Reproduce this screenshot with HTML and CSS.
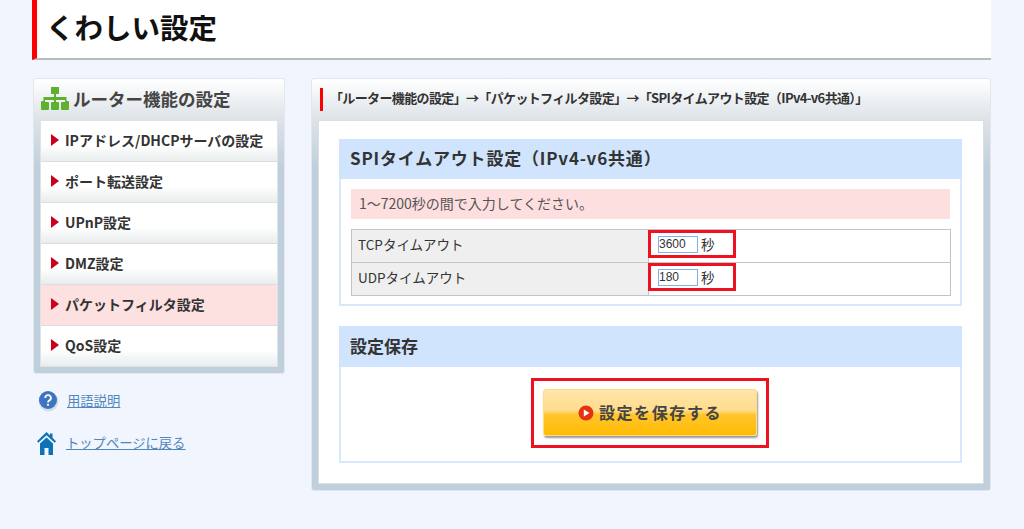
FILE: index.html
```html
<!DOCTYPE html>
<html lang="ja">
<head>
<meta charset="utf-8">
<title>くわしい設定</title>
<link rel="stylesheet" href="styles.css">
</head>
<body>
<div class="page">
  <header class="page-head"><h1>くわしい設定</h1></header>
  <div class="columns">
    <aside class="side">
      <nav class="side-box">
        <h2 class="side-title">
          <svg class="tree" width="30" height="23" viewBox="0 0 30 23"><path fill="#5fb02c" d="M11 0h8v7h-3v3h10.500v4H28a1 1 0 0 1 1 1v7a1 1 0 0 1-1 1h-6a1 1 0 0 1-1-1v-6a1 1 0 0 1 1-1h3v-2H16v2h2a1 1 0 0 1 1 1v6a1 1 0 0 1-1 1h-6a1 1 0 0 1-1-1v-6a1 1 0 0 1 1-1h2v-2H5v2h3a1 1 0 0 1 1 1v6a1 1 0 0 1-1 1H2a1 1 0 0 1-1-1v-7a1 1 0 0 1 1-1h1.500v-4H14V7h-3z"/></svg>
          ルーター機能の設定
        </h2>
        <ul class="menu">
          <li class="menu-item">IPアドレス/DHCPサーバの設定</li>
          <li class="menu-item">ポート転送設定</li>
          <li class="menu-item">UPnP設定</li>
          <li class="menu-item">DMZ設定</li>
          <li class="menu-item current">パケットフィルタ設定</li>
          <li class="menu-item">QoS設定</li>
        </ul>
      </nav>
      <a class="side-link help" href="#">
        <svg width="21" height="22" viewBox="0 0 21 22"><circle cx="10.500" cy="11.500" r="10" fill="#d5dde6"/><circle cx="10" cy="10" r="9" fill="#3f74c0"/><path d="M7.300 8a2.800 2.800 0 1 1 4.200 2.400c-1 .6-1.500 1-1.500 2" fill="none" stroke="#fff" stroke-width="1.800"/><circle cx="10" cy="14.800" r="1.100" fill="#fff"/></svg>
        <span>用語説明</span>
      </a>
      <a class="side-link home" href="#">
        <svg width="19" height="23" viewBox="0 0 19 23"><path fill="#0f72b8" d="M9.500 0 13 3.400V1.500h2.500v4.300L19 9.300l-1.300 1.500-8.200-7.600-8.200 7.600L0 9.300zM3 11.500l6.500-6 6.500 6V23h-4.500v-7h-4v7H3z"/></svg>
        <span>トップページに戻る</span>
      </a>
    </aside>
    <main class="main">
      <div class="crumb"><span class="crumb-text"><span class="crumb-label">「ルーター機能の設定」→「パケットフィルタ設定」→「SPIタイムアウト設定（IPv4-v6共通）」</span></span></div>
      <div class="panel">
        <section class="sec">
          <h3 class="sec-title wide">SPIタイムアウト設定（IPv4-v6共通）</h3>
          <div class="sec-body">
            <p class="notice">1～7200秒の間で入力してください。</p>
            <table class="form">
              <tr>
                <th>TCPタイムアウト</th>
                <td><span class="mark"><input class="num" value="3600"> 秒</span></td>
              </tr>
              <tr>
                <th>UDPタイムアウト</th>
                <td><span class="mark"><input class="num" value="180"> 秒</span></td>
              </tr>
            </table>
          </div>
        </section>
        <section class="sec save">
          <h3 class="sec-title tall">設定保存</h3>
          <div class="save-body">
            <div class="save-mark">
              <button class="save-btn" type="button">
                <svg width="16" height="16" viewBox="0 0 16 16"><circle cx="8" cy="8" r="7.500" fill="#e5330f"/><path d="M5.800 4.500 11.500 8l-5.700 3.500z" fill="#fff"/></svg>
                <span class="btn-label">設定を保存する</span>
              </button>
            </div>
          </div>
        </section>
      </div>
    </main>
  </div>
</div>
</body>
</html>
```

FILE: styles.css
```css
* { box-sizing: border-box; }
html, body { margin: 0; padding: 0; }
body {
  background: #f1f5fe;
  font-family: "Noto Sans CJK JP", "Noto Sans", sans-serif;
  color: #333;
  height: 529px;
  overflow: hidden;
}
.page { width: 959px; margin-left: 32px; }
.page-head {
  height: 60px;
  background: #fff;
  border-left: 5px solid #f00;
  border-bottom: 2px solid #bbb;
  display: flex;
  align-items: center;
  padding: 0 0 4px 9px;
}
.page-head h1 { margin: 0; font-size: 28.500px; line-height: 1; font-weight: 700; color: #111; }
.columns { display: flex; align-items: flex-start; margin-top: 18px; padding-left: 1px; gap: 26px; }
.side { width: 252px; flex: none; }
.side-box {
  height: 296px;
  border: 1px solid #e3e6ea;
  border-radius: 3px;
  background: linear-gradient(#fff 0, #dde3e8 40px, #bfcfdb 90px);
  padding: 0 6px 6px;
}
.side-title {
  margin: 0;
  height: 41px;
  display: flex;
  align-items: center;
  gap: 3px;
  padding-bottom: 3px;
  font-size: 17.500px;
  font-weight: 700;
  color: #444;
  white-space: nowrap;
}
.menu { list-style: none; margin: 0; padding: 0; border: 1px solid #dfe3e5; background: #fff; }
.menu-item {
  height: 41px;
  display: flex;
  align-items: center;
  font-size: 14px;
  font-weight: 700;
  color: #333;
  white-space: nowrap;
  padding: 0 0 3px 10px;
  background: linear-gradient(#fff 60%, #e9eded);
  border-bottom: 1px solid #ddd;
}
.menu-item:last-child { height: 40px; border-bottom: 0; }
.menu-item::before {
  content: "";
  width: 0;
  height: 0;
  border-left: 8px solid #c8001e;
  border-top: 6px solid transparent;
  border-bottom: 6px solid transparent;
  margin-right: 6px;
}
.menu-item.current { background: #fde0e0; }
.side-link {
  display: flex;
  align-items: center;
  color: #4f86bd;
  font-size: 13.300px;
  white-space: nowrap;
}
.side-link span { text-decoration: underline; position: relative; top: -1px; }
.side-link.help { margin-top: 16px; height: 22px; padding-left: 5px; gap: 8px; }
.side-link.home { margin-top: 19px; height: 24px; padding-left: 4px; gap: 10px; }
.main {
  width: 680px;
  height: 413px;
  flex: none;
  border: 1px solid #e3e6ea;
  border-radius: 3px;
  background: linear-gradient(#fff 0, #dde3e8 40px, #bfcfdb 90px);
  padding: 0 6px 6px;
}
.crumb { height: 41px; display: flex; align-items: center; padding-left: 2px; }
.crumb-text {
  border-left: 3px solid #f00;
  height: 23px;
  display: flex;
  align-items: center;
  padding-left: 7px;
  font-size: 13px;
  font-weight: 700;
  letter-spacing: -0.64px;
  color: #333;
  white-space: nowrap;
}
.crumb-label { position: relative; top: -2px; }
.panel {
  height: 364px;
  background: #fff;
  border: 1px solid #dcdfe1;
  padding: 18px 21px 0 20px;
}
.sec-title {
  margin: 0;
  height: 40px;
  background: #d0e4fd;
  display: flex;
  align-items: center;
  padding: 0 0 3px 11px;
  font-size: 17px;
  font-weight: 700;
  color: #333;
}
.sec-title.wide { letter-spacing: 0.8px; }
.sec-title.tall { height: 41px; }
.sec-body {
  height: 127px;
  border: solid #d8e8fd;
  border-width: 0 2px 2px;
  padding: 10px 10px 0;
}
.notice {
  margin: 0;
  height: 30px;
  background: #fddfe0;
  display: flex;
  align-items: center;
  padding: 0 0 3px 8px;
  font-size: 14px;
  color: #555;
}
.form {
  width: 600px;
  margin-top: 10px;
  border-collapse: collapse;
  table-layout: fixed;
  font-size: 13.500px;
}
.form th, .form td { border: 1px solid #c4c4c4; height: 33px; padding: 0; }
.form th {
  width: 297px;
  background: #efefef;
  font-weight: 400;
  text-align: left;
  padding: 0 0 4px 6px;
  color: #333;
}
.form td { position: relative; font-size: 13.500px; }
.mark {
  position: absolute;
  left: -1px;
  top: 0;
  width: 88px;
  height: 28px;
  border: 3px solid #ee1122;
  display: flex;
  align-items: center;
  gap: 3px;
  padding-left: 7px;
}
.num {
  width: 40px;
  height: 17px;
  border: 1px solid #7eb4ea;
  padding: 0;
  font-family: "Liberation Sans", sans-serif;
  font-size: 12px;
  color: #333;
  background: #fff;
}
.save { margin-top: 20px; }
.save-body {
  height: 96px;
  border: solid #d8e8fd;
  border-width: 0 2px 2px;
  display: flex;
  justify-content: center;
  padding: 11px 1px 0 0;
}
.save-mark {
  width: 238px;
  height: 70px;
  border: 3px solid #ee1122;
  padding: 8px 9px;
}
.save-btn {
  width: 214px;
  height: 47px;
  border: 1px solid #ffdc80;
  border-radius: 3px;
  background: linear-gradient(#ffe6a8 0, #ffdc8e 45%, #ffc52e 55%, #ffbb00 100%);
  box-shadow: 1px 2px 2px #9a9a9a;
  display: flex;
  align-items: center;
  justify-content: center;
  gap: 5px;
  font-family: inherit;
  font-size: 16px;
  font-weight: 700;
  letter-spacing: 1.600px;
  color: #444;
  padding: 0;
}
.btn-label { position: relative; top: -1px; }
```
